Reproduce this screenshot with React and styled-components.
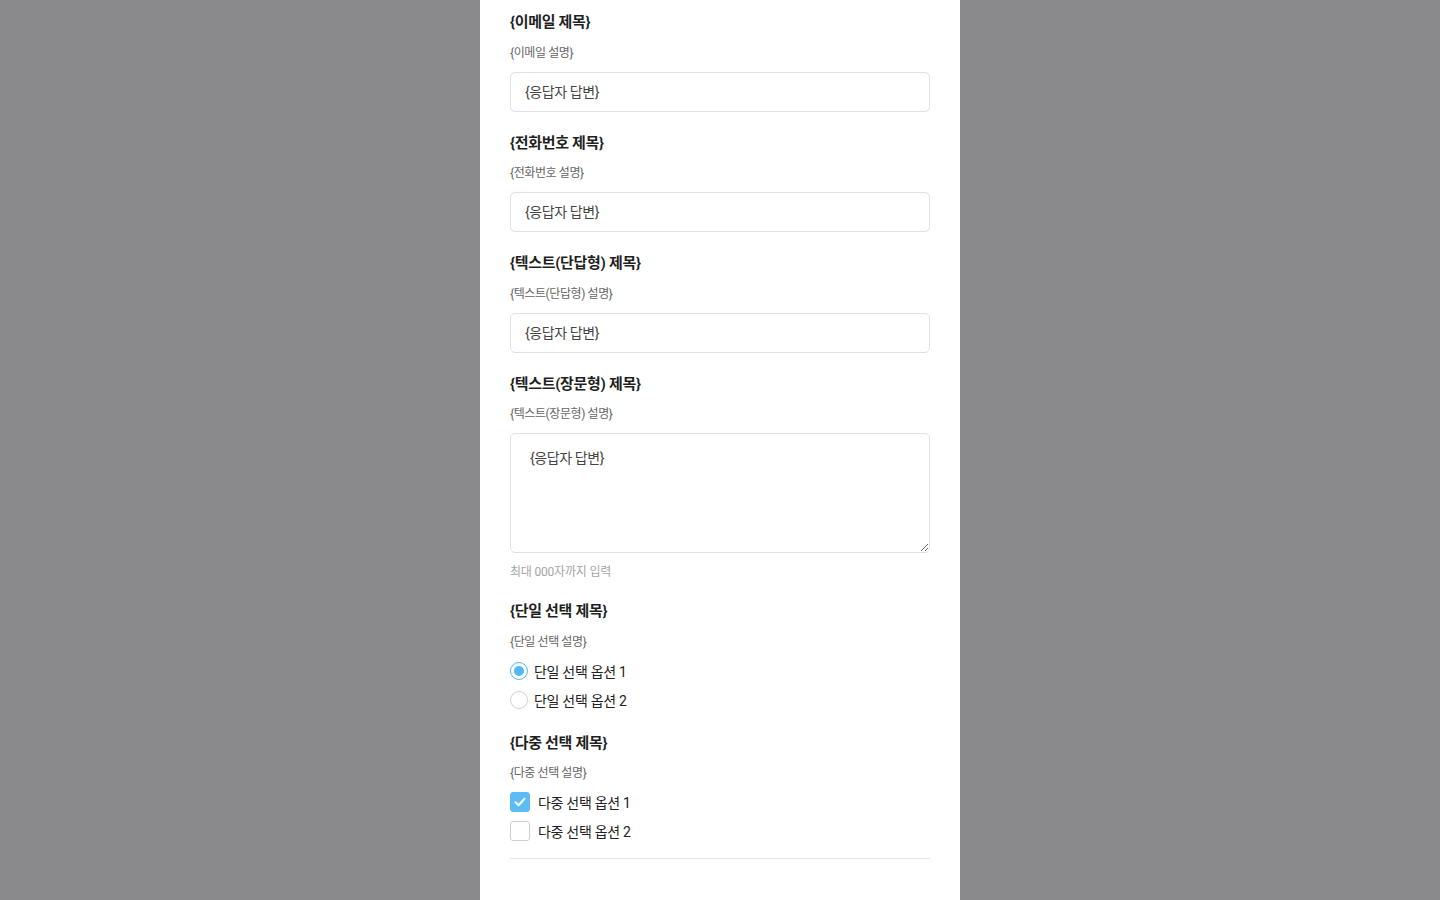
import React from 'react';
import styled, { createGlobalStyle } from 'styled-components';

const GlobalStyle = createGlobalStyle`
  html, body {
    margin: 0;
    padding: 0;
    background: #8a8a8c;
    height: 100%;
    overflow: hidden;
  }
  body {
    font-family: Roboto, "Noto Sans CJK KR", sans-serif;
  }
`;

const Page = styled.div`
  display: flex;
  justify-content: center;
  height: 900px;
  overflow: hidden;
`;

const Sheet = styled.main`
  width: 480px;
  background: #ffffff;
  padding: 11px 30px 0;
  box-sizing: border-box;
`;

const Field = styled.section`
  display: flex;
  flex-direction: column;
  margin-bottom: ${p => p.$gap ?? 20}px;
`;

const Title = styled.h2`
  margin: 0;
  font-size: 15px;
  line-height: 22px;
  font-weight: 700;
  color: #1f1f1f;
  letter-spacing: -0.3px;
`;

const Desc = styled.p`
  margin: 10.5px 0 10px;
  font-size: 12px;
  line-height: 18px;
  color: #666;
  letter-spacing: -0.4px;
`;

const Input = styled.input`
  height: 40px;
  box-sizing: border-box;
  border: 1px solid #e2e2e2;
  border-radius: 5px;
  padding: 0 14px;
  font-family: inherit;
  font-size: 14px;
  letter-spacing: -0.4px;
  color: #444;
  outline: none;
  &::placeholder {
    color: #444;
  }
`;

const TextArea = styled.textarea`
  height: 120px;
  box-sizing: border-box;
  border: 1px solid #e2e2e2;
  border-radius: 5px;
  padding: 15px 19px;
  font-family: inherit;
  font-size: 14px;
  line-height: 18px;
  letter-spacing: -0.4px;
  color: #444;
  outline: none;
  resize: vertical;
  &::placeholder {
    color: #444;
  }
`;

const Helper = styled.span`
  margin-top: 10px;
  font-size: 12px;
  line-height: 18px;
  color: #a5a5a5;
  letter-spacing: -0.2px;
`;

const Options = styled.div`
  display: flex;
  flex-direction: column;
  gap: 9px;
`;

const Option = styled.label`
  display: flex;
  align-items: center;
  gap: ${p => (p.$box ? '8px' : '6px')};
  height: 20px;
  font-size: 14px;
  letter-spacing: -0.3px;
  color: #222;
`;

const Radio = styled.span`
  width: 18px;
  height: 18px;
  box-sizing: border-box;
  border-radius: 50%;
  border: 1px solid ${p => (p.$on ? '#52b8f5' : '#d2d2d2')};
  display: flex;
  align-items: center;
  justify-content: center;
  &::after {
    content: '';
    display: ${p => (p.$on ? 'block' : 'none')};
    width: 10px;
    height: 10px;
    border-radius: 50%;
    background: #52b8f5;
  }
`;

const Check = styled.span`
  width: 20px;
  height: 20px;
  box-sizing: border-box;
  border-radius: 3px;
  border: 1px solid ${p => (p.$on ? '#5cbcf6' : '#cfcfcf')};
  background: ${p => (p.$on ? '#5cbcf6' : '#fff')};
  display: flex;
  align-items: center;
  justify-content: center;
`;

const Divider = styled.hr`
  border: none;
  border-top: 1px solid #e5e5e5;
  margin: 0 0 40px;
`;

const TextField = ({ name }) => (
  <Field>
    <Title>{`{${name} 제목}`}</Title>
    <Desc>{`{${name} 설명}`}</Desc>
    <Input placeholder="{응답자 답변}" readOnly />
  </Field>
);

const App = () => (
  <Page>
    <GlobalStyle />
    <Sheet>
      <TextField name="이메일" />
      <TextField name="전화번호" />
      <TextField name="텍스트(단답형)" />

      <Field $gap={19}>
        <Title>{'{텍스트(장문형) 제목}'}</Title>
        <Desc>{'{텍스트(장문형) 설명}'}</Desc>
        <TextArea placeholder="{응답자 답변}" readOnly />
        <Helper>최대 000자까지 입력</Helper>
      </Field>

      <Field $gap={22}>
        <Title>{'{단일 선택 제목}'}</Title>
        <Desc>{'{단일 선택 설명}'}</Desc>
        <Options>
          <Option><Radio $on />단일 선택 옵션 1</Option>
          <Option><Radio />단일 선택 옵션 2</Option>
        </Options>
      </Field>

      <Field $gap={17}>
        <Title>{'{다중 선택 제목}'}</Title>
        <Desc>{'{다중 선택 설명}'}</Desc>
        <Options>
          <Option $box>
            <Check $on>
              <svg width="12" height="10" viewBox="0 0 12 10">
                <path d="M1.5 5.2 L4.6 8.2 L10.5 1.8" fill="none" stroke="#fff" strokeWidth="2" strokeLinecap="round" strokeLinejoin="round" />
              </svg>
            </Check>
            다중 선택 옵션 1
          </Option>
          <Option $box><Check />다중 선택 옵션 2</Option>
        </Options>
      </Field>

      <Divider />

      <Field>
        <Title>{'{개인정보 수집 동의}'}</Title>
      </Field>
    </Sheet>
  </Page>
);

export default App;
